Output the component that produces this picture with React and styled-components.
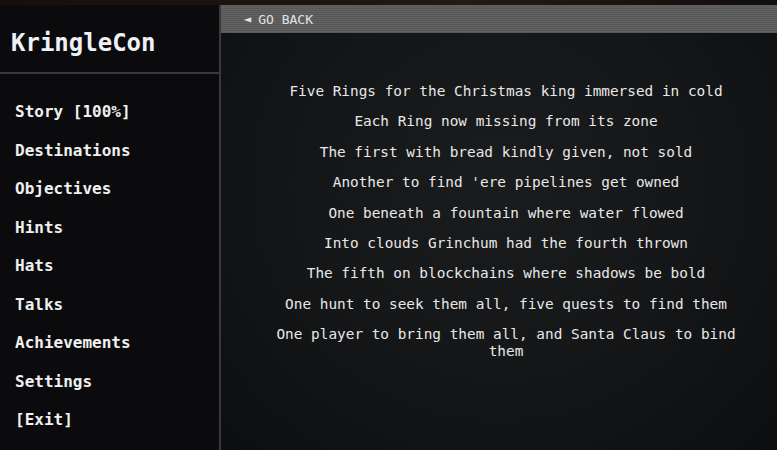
import React from "react";
import styled, { createGlobalStyle } from "styled-components";

const menu = [
  "Story [100%]",
  "Destinations",
  "Objectives",
  "Hints",
  "Hats",
  "Talks",
  "Achievements",
  "Settings",
  "[Exit]",
];

const poem = [
  "Five Rings for the Christmas king immersed in cold",
  "Each Ring now missing from its zone",
  "The first with bread kindly given, not sold",
  "Another to find 'ere pipelines get owned",
  "One beneath a fountain where water flowed",
  "Into clouds Grinchum had the fourth thrown",
  "The fifth on blockchains where shadows be bold",
  "One hunt to seek them all, five quests to find them",
  "One player to bring them all, and Santa Claus to bind them",
];

export default function App() {
  return (
    <>
      <GlobalStyle />
      <TopStrip />
      <Layout>
        <Sidebar>
          <Brand>KringleCon</Brand>
          <Menu>
            {menu.map((item) => (
              <MenuItem key={item}>{item}</MenuItem>
            ))}
          </Menu>
        </Sidebar>
        <Main>
          <BackBar>
            <Arrow>◄</Arrow>GO BACK
          </BackBar>
          <Poem>
            {poem.map((line) => (
              <Line key={line}>{line}</Line>
            ))}
          </Poem>
        </Main>
      </Layout>
    </>
  );
}

const GlobalStyle = createGlobalStyle`
  html, body {
    margin: 0;
    height: 100%;
    background: #0b0b0c;
    overflow: hidden;
  }
  body {
    font-family: "DejaVu Sans Mono", "Liberation Mono", monospace;
    color: #ececec;
  }
`;

const TopStrip = styled.div`
  height: 5px;
  background: linear-gradient(90deg, #16100d, #1c1410 40%, #221a14 60%, #120e0c);
`;

const Layout = styled.div`
  display: flex;
  height: 445px;
`;

const Sidebar = styled.aside`
  width: 219px;
  flex-shrink: 0;
  background: #0b0b0d;
  border-right: 2px solid #38393b;
  display: flex;
  flex-direction: column;
`;

const Brand = styled.div`
  height: 69px;
  box-sizing: border-box;
  padding: 8px 0 0 11px;
  display: flex;
  align-items: center;
  font-size: 24px;
  font-weight: bold;
  color: #eef2f6;
  border-bottom: 2px solid #3a3b3d;
`;

const Menu = styled.nav`
  padding-top: 19px;
  display: flex;
  flex-direction: column;
`;

const MenuItem = styled.div`
  height: 38.5px;
  line-height: 38.5px;
  padding-left: 15px;
  font-size: 16px;
  font-weight: bold;
  color: #f0f0f0;
`;

const Main = styled.main`
  flex: 1;
  display: flex;
  flex-direction: column;
  background: radial-gradient(ellipse at 50% 40%, #1b1c1d 0%, #151617 50%, #0d0e0f 100%);
`;

const BackBar = styled.div`
  height: 28px;
  box-sizing: border-box;
  padding-left: 23px;
  display: flex;
  align-items: center;
  font-size: 13px;
  color: #e4e4e4;
  background: repeating-linear-gradient(
    180deg,
    #616161 0px,
    #616161 1px,
    #585858 1px,
    #585858 2px
  );
`;

const Arrow = styled.span`
  font-size: 12px;
  margin-right: 7px;
`;

const Poem = styled.div`
  padding: 50px 26px 0 40px;
  display: flex;
  flex-direction: column;
  gap: 13.4px;
  text-align: center;
`;

const Line = styled.p`
  margin: 0;
  font-size: 14.4px;
  line-height: 17px;
  color: #e8e8e8;
`;
